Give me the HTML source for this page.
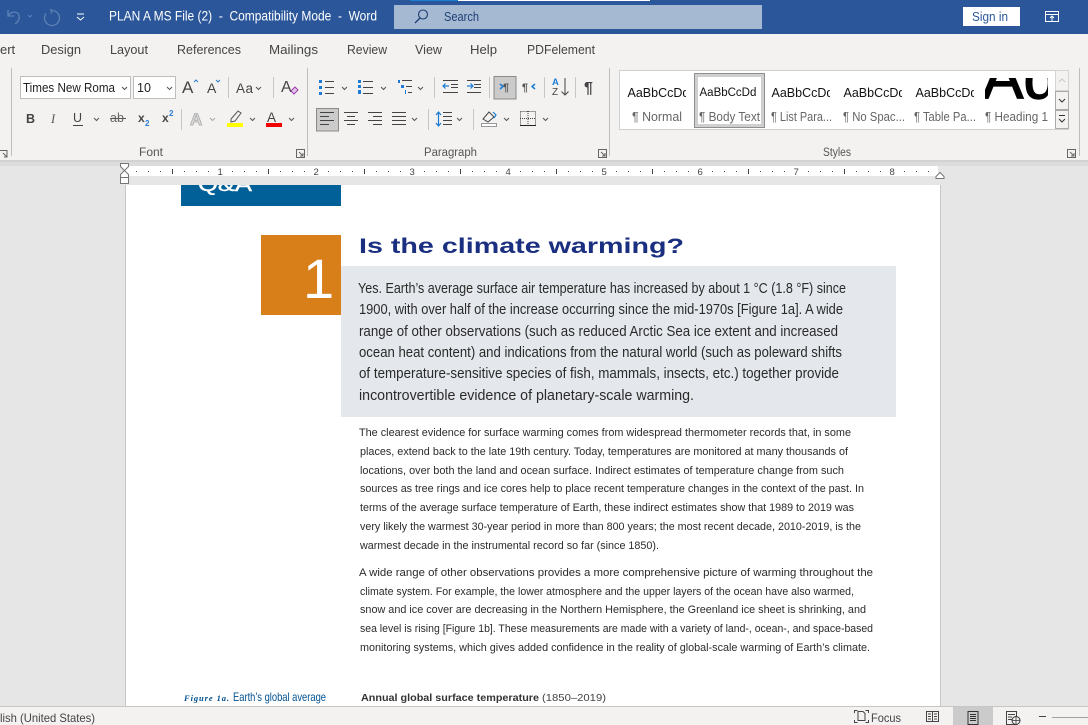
<!DOCTYPE html>
<html lang="en"><head><meta charset="utf-8"><title>PLAN A MS File (2) - Word</title>
<style>
html,body{margin:0;padding:0;width:1088px;height:725px;overflow:hidden;background:#e6e6e6}
svg{position:absolute;left:0;top:0;display:block}
text{font-family:"Liberation Sans",sans-serif;white-space:pre}
.tab{font-size:13px;fill:#444}
.g{font-size:11.500px;fill:#555}
.sl{font-size:12.500px;fill:#666}
.ss{font-size:12.500px;fill:#111}
.ln{stroke:#444;stroke-width:1;fill:none}
.ch{stroke:#555;stroke-width:1;fill:none}
.sep{fill:#c8c6c4}
.lead{font-size:14.500px;fill:#2a2a2a}
.body{font-size:11px;fill:#2b2b2b}
</style></head><body>
<svg width="1088" height="725" viewBox="0 0 1088 725" xmlns="http://www.w3.org/2000/svg">
<defs>
<clipPath id="qa"><rect x="181" y="185" width="160" height="21"/></clipPath>
<clipPath id="h1"><rect x="985" y="78" width="63" height="22"/></clipPath>
<clipPath id="s1"><rect x="627" y="80" width="59" height="24"/></clipPath>
<clipPath id="s2"><rect x="699" y="80" width="58" height="24"/></clipPath>
<clipPath id="s3"><rect x="771" y="80" width="59" height="24"/></clipPath>
<clipPath id="s4"><rect x="843" y="80" width="59" height="24"/></clipPath>
<clipPath id="s5"><rect x="915" y="80" width="59" height="24"/></clipPath>
</defs>

<rect width="1088" height="725" fill="#e6e6e6"/>

<!-- title bar -->
<rect width="1088" height="34" fill="#2b579a"/>
<rect x="410" y="0" width="48" height="1" fill="#1a7fd0"/>
<rect x="458" y="0" width="192" height="1" fill="#fff"/>
<g fill="none" stroke="#5d80b5" stroke-width="1.300">
<path d="M8 10v6h6M8 16c3-5 9-5 11-1 1 4-1 7-4 9"/>
<path d="M28 15l2 2 2-2" stroke-width="1"/>
<path d="M52 10.500a7.500 7.500 0 1 1-6 3M52 10.500l-2-1M52 10.500l-1 3"/>
</g>
<path d="M77 14h7M77 17l3.500 3 3.500-3" fill="none" stroke="#fff" stroke-width="1"/>
<text x="109" y="20.500" font-size="13.500" fill="#fff" textLength="268" lengthAdjust="spacingAndGlyphs" xml:space="preserve">PLAN A MS File (2)  -  Compatibility Mode  -  Word</text>
<rect x="394" y="5" width="368" height="24" fill="#a6b9d3"/>
<circle cx="423" cy="14.500" r="4.500" fill="none" stroke="#1f3f75" stroke-width="1.100"/>
<path d="M420 18l-5 5" stroke="#1f3f75" stroke-width="1.300"/>
<text x="444" y="21" font-size="13" fill="#1f3f75" textLength="35" lengthAdjust="spacingAndGlyphs">Search</text>
<rect x="963" y="7" width="57" height="19" fill="#fff"/>
<text x="972" y="21" font-size="13" fill="#2b579a" textLength="36" lengthAdjust="spacingAndGlyphs">Sign in</text>
<path d="M1045.500 11.500h13v10h-13zM1045.500 14.500h13M1052 21v-5M1050 18l2-2 2 2" fill="none" stroke="#fff" stroke-width="1"/>

<!-- tabs + ribbon -->
<rect y="34" width="1088" height="126" fill="#f3f2f1"/>
<rect y="160" width="1088" height="6" fill="#dcdcdc"/>
<rect y="160" width="1088" height="2" fill="#d2d2d2"/>
<text class="tab" x="0" y="54">ert</text>
<text class="tab" x="41" y="54" textLength="40" lengthAdjust="spacingAndGlyphs">Design</text>
<text class="tab" x="110" y="54" textLength="38" lengthAdjust="spacingAndGlyphs">Layout</text>
<text class="tab" x="177" y="54" textLength="64" lengthAdjust="spacingAndGlyphs">References</text>
<text class="tab" x="269" y="54" textLength="49" lengthAdjust="spacingAndGlyphs">Mailings</text>
<text class="tab" x="347" y="54" textLength="40" lengthAdjust="spacingAndGlyphs">Review</text>
<text class="tab" x="415" y="54" textLength="27" lengthAdjust="spacingAndGlyphs">View</text>
<text class="tab" x="470" y="54" textLength="27" lengthAdjust="spacingAndGlyphs">Help</text>
<text class="tab" x="527" y="54" textLength="68" lengthAdjust="spacingAndGlyphs">PDFelement</text>

<!-- group separators -->
<rect x="11" y="68" width="1" height="88" fill="#bdbdbd"/>
<rect x="307" y="68" width="1" height="88" fill="#bdbdbd"/>
<rect x="609" y="68" width="1" height="88" fill="#bdbdbd"/>
<rect x="1079" y="68" width="1" height="88" fill="#bdbdbd"/>

<!-- font row 1 -->
<rect x="20.500" y="76.500" width="110" height="22" fill="#fff" stroke="#bdbdbd"/>
<text x="23" y="92" font-size="13" fill="#222" textLength="92" lengthAdjust="spacingAndGlyphs">Times New Roma</text>
<path class="ch" d="M122 87l2.500 2.500 2.500-2.500"/>
<rect x="133.500" y="76.500" width="42" height="22" fill="#fff" stroke="#bdbdbd"/>
<text x="137" y="92" font-size="12.500" fill="#222">10</text>
<path class="ch" d="M167 87l2.500 2.500 2.500-2.500"/>
<text x="182" y="93" font-size="17" fill="#444">A</text>
<path d="M194 82l2-2 2 2" fill="none" stroke="#2b7cd3"/>
<text x="207" y="93" font-size="14" fill="#444">A</text>
<path d="M216 80l2 2 2-2" fill="none" stroke="#2b7cd3"/>
<rect class="sep" x="228" y="77" width="1" height="21"/>
<text x="236" y="93" font-size="13.500" fill="#444" textLength="17">Aa</text>
<path class="ch" d="M256 87l2.500 2.500 2.500-2.500"/>
<rect class="sep" x="273" y="77" width="1" height="21"/>
<text x="281" y="92" font-size="16" fill="#444">A</text>
<path d="M291 91l4-4 3 3-4 4z" fill="#e4c8ea" stroke="#a03ab0"/>

<!-- font row 2 -->
<text x="26" y="123" font-size="12.500" font-weight="bold" fill="#444">B</text>
<text x="51" y="123" font-size="12.500" font-style="italic" fill="#555" style="font-family:'Liberation Serif',serif">I</text>
<text x="73" y="122" font-size="12.500" fill="#444">U</text>
<path d="M73 125.500h10" stroke="#444"/>
<path class="ch" d="M94 118l2.500 2.500 2.500-2.500"/>
<text x="110" y="122" font-size="12.500" fill="#666">ab</text>
<path d="M110 118.500h16" stroke="#555"/>
<text x="138" y="122" font-size="12" font-weight="bold" fill="#444">x</text>
<text x="145" y="126" font-size="8" font-weight="bold" fill="#2b7cd3">2</text>
<text x="162" y="122" font-size="12" font-weight="bold" fill="#444">x</text>
<text x="169" y="116" font-size="8" font-weight="bold" fill="#2b7cd3">2</text>
<rect class="sep" x="181" y="109" width="1" height="21"/>
<text x="190" y="125" font-size="17" font-weight="bold" fill="#dcdcdc" stroke="#a8a8a8" stroke-width=".8">A</text>
<path d="M210 118l2.500 2.500 2.500-2.500" fill="none" stroke="#aaa"/>
<path d="M231 119l7-8 3 2-6 8-4 1z" fill="none" stroke="#555"/>
<rect x="227" y="123" width="16" height="4" fill="#ffff00"/>
<path class="ch" d="M250 118l2.500 2.500 2.500-2.500"/>
<text x="267" y="122" font-size="13.500" fill="#444">A</text>
<rect x="266" y="123" width="16" height="4" fill="#f00000"/>
<path class="ch" d="M289 118l2.500 2.500 2.500-2.500"/>

<text class="g" x="139" y="156" textLength="24" lengthAdjust="spacingAndGlyphs">Font</text>
<path d="M0 150.500h7v7M3 153l4 4M7 154v3h-3" fill="none" stroke="#666"/>
<path d="M296.500 149.500h8v8h-8zM299 152l4 4M303 153v3h-3" fill="none" stroke="#666"/>

<!-- paragraph row 1 -->
<g fill="#1c7cd5">
<rect x="319" y="80" width="3" height="3"/><rect x="319" y="86" width="3" height="3"/><rect x="319" y="92" width="3" height="3"/>
<rect x="358" y="80" width="3" height="3"/><rect x="358" y="85" width="3" height="3"/><rect x="358" y="90" width="3" height="4"/>
<rect x="398" y="80" width="2" height="3"/><rect x="401" y="85" width="3" height="3"/><rect x="405" y="90" width="1" height="4"/>
</g>
<path class="ln" d="M325 81.500h9M325 87.500h9M325 93.500h9M363 81.500h10M363 87.500h10M363 93.500h10M402 80.500h10M406 86.500h6M408 92.500h4"/>
<path class="ch" d="M342 87l2.500 2.500 2.500-2.500M381 87l2.500 2.500 2.500-2.500M418 87l2.500 2.500 2.500-2.500"/>
<rect class="sep" x="434" y="77" width="1" height="21"/>
<path class="ln" d="M443 80.500h15M451 84.500h7M451 87.500h7M443 92.500h15M467 80.500h14M474 84.500h7M474 87.500h7M467 92.500h14"/>
<path d="M449 86h-6M445.500 83.500l-2.500 2.500 2.500 2.500M467 86h6M470.500 83.500l2.500 2.500-2.500 2.500" fill="none" stroke="#1c7cd5" stroke-width="1.200"/>
<rect class="sep" x="489" y="77" width="1" height="21"/>
<rect x="494" y="76.500" width="22" height="22.500" fill="#cbcbcb" stroke="#8a8a8a"/>
<path d="M500 84l3 2.500-3 2.500" fill="none" stroke="#1c7cd5" stroke-width="1.500"/>
<text x="503" y="91" font-size="11" font-weight="bold" fill="#555">¶</text>
<text x="522" y="91" font-size="11" font-weight="bold" fill="#555">¶</text>
<path d="M535 84l-3 2.500 3 2.500" fill="none" stroke="#1c7cd5" stroke-width="1.500"/>
<rect class="sep" x="544" y="77" width="1" height="21"/>
<text x="552" y="85" font-size="9.500" font-weight="bold" fill="#1c7cd5">A</text>
<text x="552" y="95" font-size="10" fill="#444">Z</text>
<path d="M565 78v17M561.500 91.500l3.500 3.500 3.500-3.500" fill="none" stroke="#444"/>
<rect class="sep" x="575" y="77" width="1" height="21"/>
<text x="584" y="93" font-size="16" font-weight="bold" fill="#444">¶</text>

<!-- paragraph row 2 -->
<rect x="316.500" y="108.500" width="22" height="22.500" fill="#cbcbcb" stroke="#8a8a8a"/>
<path class="ln" d="M320 112.500h14M320 116.500h9M320 120.500h14M320 124.500h9"/>
<path class="ln" d="M344 112.500h14M347 116.500h8M344 120.500h14M347 124.500h8"/>
<path class="ln" d="M368 112.500h14M373 116.500h9M368 120.500h14M373 124.500h9"/>
<path class="ln" d="M392 112.500h14M392 116.500h14M392 120.500h14M392 124.500h14"/>
<path class="ch" d="M412 118l2.500 2.500 2.500-2.500"/>
<rect class="sep" x="428" y="109" width="1" height="21"/>
<path d="M438.500 113v12M436 115l2.500-3 2.500 3M436 123l2.500 3 2.500-3" fill="none" stroke="#1c7cd5" stroke-width="1.200"/>
<path class="ln" d="M443 112.500h9M443 116.500h9M443 120.500h9M443 124.500h9"/>
<path class="ch" d="M457 118l2.500 2.500 2.500-2.500"/>
<rect class="sep" x="473" y="109" width="1" height="21"/>
<path d="M483 119l6-7 5 5-6 5z" fill="none" stroke="#444"/>
<path d="M493 112l3 3 -2 3" fill="none" stroke="#1c7cd5" stroke-width="1.200"/>
<rect x="481.500" y="123.500" width="15" height="3" fill="#fff" stroke="#999"/>
<path class="ch" d="M504 118l2.500 2.500 2.500-2.500"/>
<path d="M520.500 111.500h15v14M520.500 111.500v14M528 111v15M520 118.500h16" fill="none" stroke="#444" stroke-dasharray="1 1"/>
<path d="M520 125.500h16" stroke="#222"/>
<path class="ch" d="M543 118l2.500 2.500 2.500-2.500"/>
<text class="g" x="424" y="156" textLength="53" lengthAdjust="spacingAndGlyphs">Paragraph</text>
<path d="M598.500 149.500h8v8h-8zM601 152l4 4M605 153v3h-3" fill="none" stroke="#666"/>

<!-- styles gallery -->
<rect x="619.500" y="70.500" width="449" height="59" fill="#fff" stroke="#d0d0d0"/>
<rect x="694.500" y="73.500" width="70" height="54" fill="#fff" stroke="#8f8f8f" stroke-width="1"/>
<rect x="696.500" y="75.500" width="66" height="50" fill="#fff" stroke="#cfcfcf" stroke-width="3"/>
<g clip-path="url(#s1)"><text class="ss" x="627.500" y="97">AaBbCcDdEe</text></g>
<g clip-path="url(#s2)"><text x="699.500" y="96" font-size="11.500" fill="#111">AaBbCcDdEe</text></g>
<g clip-path="url(#s3)"><text class="ss" x="771.500" y="97">AaBbCcDdEe</text></g>
<g clip-path="url(#s4)"><text class="ss" x="843.500" y="97">AaBbCcDdEe</text></g>
<g clip-path="url(#s5)"><text class="ss" x="915.500" y="97">AaBbCcDdEe</text></g>
<g clip-path="url(#h1)"><text x="982" y="98" font-size="60" fill="#000" stroke="#000" stroke-width="1.200" textLength="76" lengthAdjust="spacingAndGlyphs">Ad</text></g>
<text class="sl" x="632" y="121" textLength="50" lengthAdjust="spacingAndGlyphs">¶ Normal</text>
<text class="sl" x="699" y="121" textLength="61" lengthAdjust="spacingAndGlyphs">¶ Body Text</text>
<text class="sl" x="771" y="121" textLength="61" lengthAdjust="spacingAndGlyphs">¶ List Para...</text>
<text class="sl" x="843" y="121" textLength="62" lengthAdjust="spacingAndGlyphs">¶ No Spac...</text>
<text class="sl" x="914" y="121" textLength="62" lengthAdjust="spacingAndGlyphs">¶ Table Pa...</text>
<text class="sl" x="985" y="121" textLength="63" lengthAdjust="spacingAndGlyphs">¶ Heading 1</text>
<rect x="1055.500" y="70.500" width="13" height="20" fill="#f3f2f1" stroke="#d5d5d5"/>
<rect x="1055.500" y="91.500" width="13" height="18" fill="#f3f2f1" stroke="#aaa"/>
<rect x="1055.500" y="110.500" width="13" height="18" fill="#f3f2f1" stroke="#aaa"/>
<path d="M1059 82l3-3 3 3" fill="none" stroke="#c8c8c8"/>
<path d="M1059 99l3 3 3-3" fill="none" stroke="#333"/>
<path d="M1059 115.500h6M1059 119l3 3 3-3" fill="none" stroke="#333"/>
<text class="g" x="823" y="156" textLength="28" lengthAdjust="spacingAndGlyphs">Styles</text>
<path d="M1067.500 149.500h8v8h-8zM1070 152l4 4M1074 153v3h-3" fill="none" stroke="#666"/>

<!-- ruler -->
<rect x="125" y="166" width="813" height="10" fill="#fff"/>
<g fill="#444">
<rect x="136" y="171" width="1" height="1"/><rect x="148" y="171" width="1" height="1"/><rect x="160" y="171" width="1" height="1"/><rect x="172" y="169" width="1" height="5"/><rect x="184" y="171" width="1" height="1"/><rect x="196" y="171" width="1" height="1"/><rect x="208" y="171" width="1" height="1"/>
<rect x="232" y="171" width="1" height="1"/><rect x="244" y="171" width="1" height="1"/><rect x="256" y="171" width="1" height="1"/><rect x="268" y="169" width="1" height="5"/><rect x="280" y="171" width="1" height="1"/><rect x="292" y="171" width="1" height="1"/><rect x="304" y="171" width="1" height="1"/>
<rect x="328" y="171" width="1" height="1"/><rect x="340" y="171" width="1" height="1"/><rect x="352" y="171" width="1" height="1"/><rect x="364" y="169" width="1" height="5"/><rect x="376" y="171" width="1" height="1"/><rect x="388" y="171" width="1" height="1"/><rect x="400" y="171" width="1" height="1"/>
<rect x="424" y="171" width="1" height="1"/><rect x="436" y="171" width="1" height="1"/><rect x="448" y="171" width="1" height="1"/><rect x="460" y="169" width="1" height="5"/><rect x="472" y="171" width="1" height="1"/><rect x="484" y="171" width="1" height="1"/><rect x="496" y="171" width="1" height="1"/>
<rect x="520" y="171" width="1" height="1"/><rect x="532" y="171" width="1" height="1"/><rect x="544" y="171" width="1" height="1"/><rect x="556" y="169" width="1" height="5"/><rect x="568" y="171" width="1" height="1"/><rect x="580" y="171" width="1" height="1"/><rect x="592" y="171" width="1" height="1"/>
<rect x="616" y="171" width="1" height="1"/><rect x="628" y="171" width="1" height="1"/><rect x="640" y="171" width="1" height="1"/><rect x="652" y="169" width="1" height="5"/><rect x="664" y="171" width="1" height="1"/><rect x="676" y="171" width="1" height="1"/><rect x="688" y="171" width="1" height="1"/>
<rect x="712" y="171" width="1" height="1"/><rect x="724" y="171" width="1" height="1"/><rect x="736" y="171" width="1" height="1"/><rect x="748" y="169" width="1" height="5"/><rect x="760" y="171" width="1" height="1"/><rect x="772" y="171" width="1" height="1"/><rect x="784" y="171" width="1" height="1"/>
<rect x="808" y="171" width="1" height="1"/><rect x="820" y="171" width="1" height="1"/><rect x="832" y="171" width="1" height="1"/><rect x="844" y="169" width="1" height="5"/><rect x="856" y="171" width="1" height="1"/><rect x="868" y="171" width="1" height="1"/><rect x="880" y="171" width="1" height="1"/>
<rect x="904" y="171" width="1" height="1"/><rect x="916" y="171" width="1" height="1"/><rect x="928" y="171" width="1" height="1"/>
</g>
<g font-size="9.500" fill="#444">
<text x="217.500" y="175">1</text><text x="313.500" y="175">2</text><text x="409.500" y="175">3</text><text x="505.500" y="175">4</text><text x="601.500" y="175">5</text><text x="697.500" y="175">6</text><text x="793.500" y="175">7</text><text x="889.500" y="175">8</text>
</g>
<path d="M120.500 163.500h8v3l-4 4-4-4zM124.500 170.500l4 4v3h-8v-3zM120.500 177.500h8v6h-8z" fill="#fff" stroke="#777"/>
<path d="M936 178.500v-2l4-4 4 4v2z" fill="#fff" stroke="#777"/>

<!-- page -->
<rect x="125" y="185" width="1" height="521" fill="#c6c6c6"/>
<rect x="940" y="185" width="1" height="521" fill="#c6c6c6"/>
<rect x="126" y="185" width="814" height="521" fill="#fff"/>
<rect x="181" y="185" width="160" height="21" fill="#006097"/>
<g clip-path="url(#qa)"><text x="198" y="191" font-size="20" fill="#fff" stroke="#fff" stroke-width=".4" textLength="54" lengthAdjust="spacingAndGlyphs">Q&amp;A</text></g>
<rect x="261" y="235" width="80" height="80" fill="#d97f1a"/>
<text x="303" y="298" font-size="56" fill="#fff">1</text>
<text x="359" y="253" font-size="21" font-weight="bold" fill="#1b2f80" textLength="325" lengthAdjust="spacingAndGlyphs">Is the climate warming?</text>
<rect x="341" y="266" width="555" height="151" fill="#e4e8ec"/>

<text class="lead" x="358" y="293" textLength="488" lengthAdjust="spacingAndGlyphs">Yes. Earth’s average surface air temperature has increased by about 1 °C (1.8 °F) since</text>
<text class="lead" x="359" y="314" textLength="484" lengthAdjust="spacingAndGlyphs">1900, with over half of the increase occurring since the mid-1970s [Figure 1a]. A wide</text>
<text class="lead" x="359" y="336" textLength="479" lengthAdjust="spacingAndGlyphs">range of other observations (such as reduced Arctic Sea ice extent and increased</text>
<text class="lead" x="359" y="357" textLength="483" lengthAdjust="spacingAndGlyphs">ocean heat content) and indications from the natural world (such as poleward shifts</text>
<text class="lead" x="359" y="378" textLength="480" lengthAdjust="spacingAndGlyphs">of temperature-sensitive species of fish, mammals, insects, etc.) together provide</text>
<text class="lead" x="359" y="400" textLength="335" lengthAdjust="spacingAndGlyphs">incontrovertible evidence of planetary-scale warming.</text>

<text class="body" x="359" y="436" textLength="492" lengthAdjust="spacingAndGlyphs">The clearest evidence for surface warming comes from widespread thermometer records that, in some</text>
<text class="body" x="360" y="455" textLength="488" lengthAdjust="spacingAndGlyphs">places, extend back to the late 19th century. Today, temperatures are monitored at many thousands of</text>
<text class="body" x="360" y="474" textLength="484" lengthAdjust="spacingAndGlyphs">locations, over both the land and ocean surface. Indirect estimates of temperature change from such</text>
<text class="body" x="360" y="492" textLength="504" lengthAdjust="spacingAndGlyphs">sources as tree rings and ice cores help to place recent temperature changes in the context of the past. In</text>
<text class="body" x="360" y="511" textLength="494" lengthAdjust="spacingAndGlyphs">terms of the average surface temperature of Earth, these indirect estimates show that 1989 to 2019 was</text>
<text class="body" x="360" y="530" textLength="501" lengthAdjust="spacingAndGlyphs">very likely the warmest 30-year period in more than 800 years; the most recent decade, 2010-2019, is the</text>
<text class="body" x="360" y="549" textLength="299" lengthAdjust="spacingAndGlyphs">warmest decade in the instrumental record so far (since 1850).</text>

<text class="body" x="359" y="576" textLength="514" lengthAdjust="spacingAndGlyphs">A wide range of other observations provides a more comprehensive picture of warming throughout the</text>
<text class="body" x="360" y="595" textLength="494" lengthAdjust="spacingAndGlyphs">climate system. For example, the lower atmosphere and the upper layers of the ocean have also warmed,</text>
<text class="body" x="360" y="613" textLength="506" lengthAdjust="spacingAndGlyphs">snow and ice cover are decreasing in the Northern Hemisphere, the Greenland ice sheet is shrinking, and</text>
<text class="body" x="360" y="632" textLength="513" lengthAdjust="spacingAndGlyphs">sea level is rising [Figure 1b]. These measurements are made with a variety of land-, ocean-, and space-based</text>
<text class="body" x="360" y="651" textLength="510" lengthAdjust="spacingAndGlyphs">monitoring systems, which gives added confidence in the reality of global-scale warming of Earth’s climate.</text>

<text x="184" y="701" font-size="8.500" font-weight="bold" font-style="italic" fill="#00508f" textLength="45" style="font-family:'Liberation Serif',serif">Figure 1a.</text>
<text x="233" y="701" font-size="12" fill="#00508f" textLength="93" lengthAdjust="spacingAndGlyphs">Earth’s global average</text>
<text x="361" y="701" font-size="10.500" font-weight="bold" fill="#333" textLength="178" lengthAdjust="spacingAndGlyphs">Annual global surface temperature</text>
<text x="542" y="701" font-size="10.500" fill="#444" textLength="64" lengthAdjust="spacingAndGlyphs">(1850–2019)</text>

<!-- status bar -->
<rect y="706" width="1088" height="19" fill="#f3f2f1"/>
<rect y="706" width="1088" height="1" fill="#c6c6c6"/>
<text x="0" y="722" font-size="12" fill="#444" textLength="95" lengthAdjust="spacingAndGlyphs">lish (United States)</text>
<path d="M854.500 713v-2.500h3M868.500 713v-2.500h-3M854.500 720v2.500h3M868.500 720v2.500h-3M858 720.500v-9h5l2 2v7z" fill="none" stroke="#444"/>
<text x="871" y="722" font-size="12" fill="#444" textLength="30" lengthAdjust="spacingAndGlyphs">Focus</text>
<path d="M926.500 711.500h6v10h-6zM932.500 711.500h6v10h-6zM928 714h3M928 716.500h3M928 719h3M934 714h3M934 716.500h3M934 719h3" fill="none" stroke="#444"/>
<rect x="953" y="707" width="40" height="18" fill="#cbcbcb"/>
<path d="M968 711.500h10v13h-10zM970 714.500h6M970 716.500h6M970 718.500h6M970 720.500h6" fill="none" stroke="#333"/>
<path d="M1006.500 711.500h10v13h-10zM1008 714.500h7M1008 717h4M1008 719.500h4" fill="none" stroke="#444"/>
<circle cx="1016" cy="720.500" r="4" fill="#f3f2f1" stroke="#333"/>
<path d="M1012 720.500h8M1016 716.500v8" stroke="#333" stroke-width=".8"/>
<rect x="1039" y="716" width="7" height="1" fill="#444"/>
<rect x="1052" y="717" width="36" height="1" fill="#a0a0a0"/>
</svg>
</body></html>
